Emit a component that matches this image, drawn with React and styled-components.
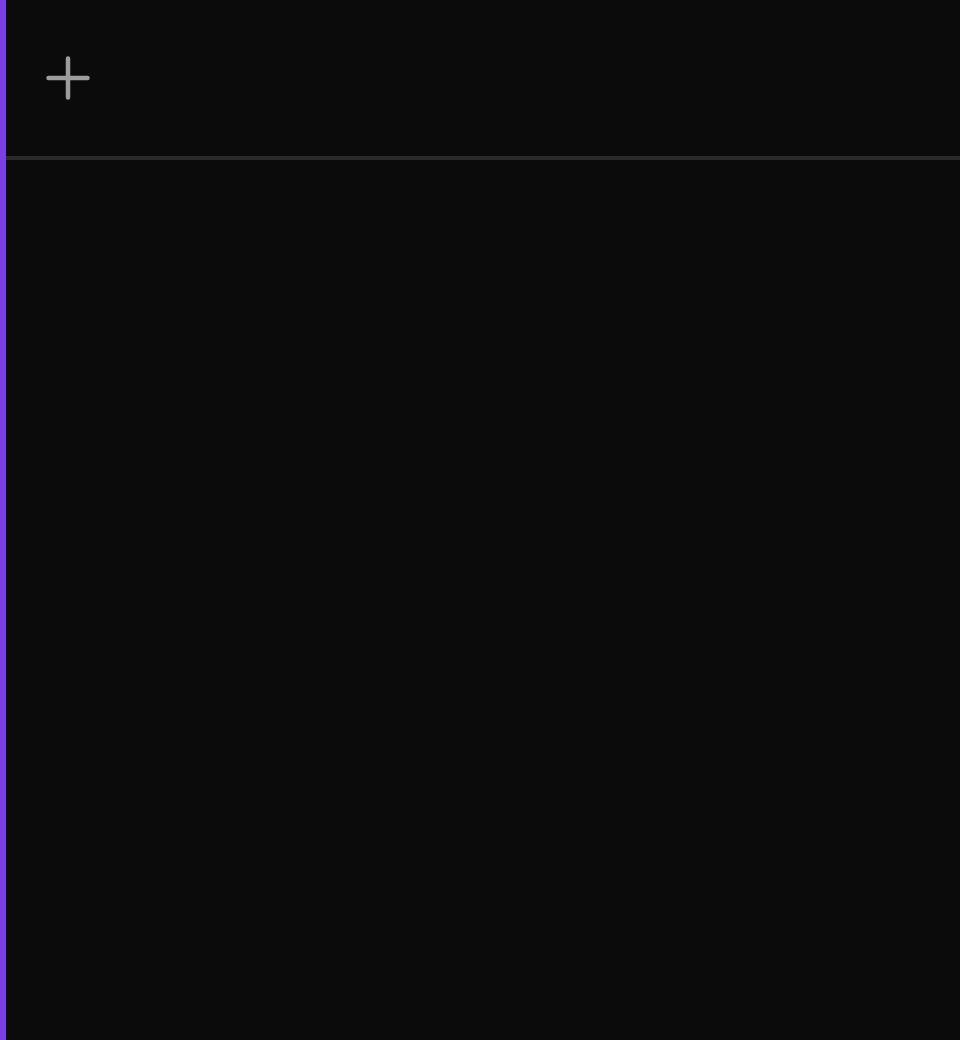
import React from "react";
import styled, { createGlobalStyle } from "styled-components";

const GlobalStyle = createGlobalStyle`
  html, body {
    margin: 0;
    padding: 0;
    background: #0b0b0b;
    font-family: "Inter", "Liberation Sans", sans-serif;
  }
`;

const Page = styled.div`
  display: flex;
  flex-direction: row;
  height: 1040px;
  background: #0b0b0b;
`;

const AccentBar = styled.div`
  width: 6px;
  flex-shrink: 0;
  background: #7a3fe4;
`;

const Main = styled.div`
  flex: 1;
  display: flex;
  flex-direction: column;
`;

const Header = styled.div`
  height: 156px;
  display: flex;
  align-items: center;
  padding-left: 40px;
  border-bottom: 4px solid #2a2a2a;
  box-sizing: content-box;
`;

const AddButton = styled.button`
  width: 44px;
  height: 44px;
  padding: 0;
  border: none;
  background: transparent;
  cursor: pointer;
  display: flex;
  align-items: center;
  justify-content: center;
`;

const PlusIcon = () => (
  <svg width="44" height="44" viewBox="0 0 44 44" fill="none">
    <path
      d="M22 2.5v39M2.5 22h39"
      stroke="#9d9d9d"
      strokeWidth="4.5"
      strokeLinecap="round"
    />
  </svg>
);

const Content = styled.div`
  flex: 1;
`;

const App = () => {
  return (
    <>
      <GlobalStyle />
      <Page>
        <AccentBar />
        <Main>
          <Header>
            <AddButton aria-label="Add">
              <PlusIcon />
            </AddButton>
          </Header>
          <Content />
        </Main>
      </Page>
    </>
  );
};

export default App;
